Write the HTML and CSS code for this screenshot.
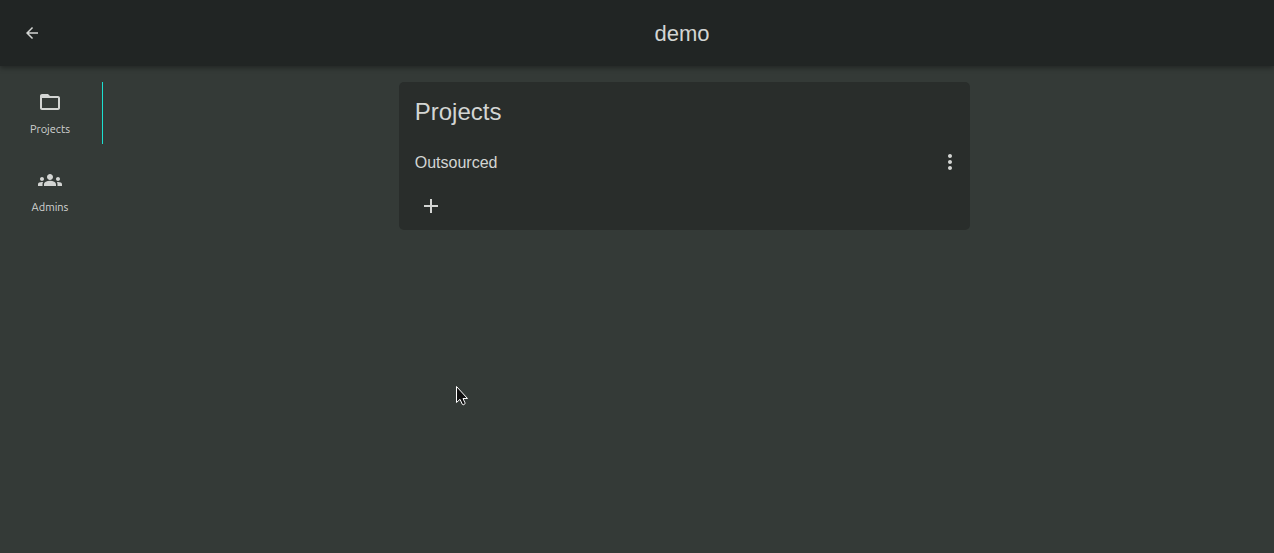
FILE: index.html
```html
<!DOCTYPE html>
<html lang="en">
<head>
<meta charset="utf-8">
<meta name="viewport" content="width=device-width, initial-scale=1">
<title>demo</title>
<link rel="stylesheet" href="styles.css">
</head>
<body>
<header class="topbar">
  <button class="icon-button back" type="button" aria-label="Back">
    <svg class="icon-small" viewBox="0 0 24 24"><path d="M20 11H7.83l5.59-5.59L12 4l-8 8 8 8 1.41-1.41L7.83 13H20v-2z"/></svg>
  </button>
  <h1 class="title">demo</h1>
</header>
<div class="layout">
  <nav class="sidebar">
    <a class="nav-item active" href="#projects" aria-current="page">
      <svg class="icon" viewBox="0 0 24 24"><path d="M20 6h-8l-2-2H4c-1.100 0-1.990.9-1.990 2L2 18c0 1.100.9 2 2 2h16c1.100 0 2-.9 2-2V8c0-1.100-.9-2-2-2zm0 12H4V8h16v10z"/></svg>
      <span>Projects</span>
    </a>
    <a class="nav-item" href="#admins">
      <svg class="icon" viewBox="0 0 24 24"><path d="M12 12.75c1.63 0 3.07.39 4.24.9 1.08.48 1.76 1.56 1.76 2.73V18H6v-1.61c0-1.18.68-2.26 1.76-2.73 1.17-.52 2.61-.91 4.24-.91zM4 13c1.100 0 2-.9 2-2s-.9-2-2-2-2 .9-2 2 .9 2 2 2zm1.130 1.100C4.760 14.040 4.390 14 4 14c-.99 0-1.930.21-2.780.58C.48 14.900 0 15.620 0 16.430V18h4.500v-1.610c0-.83.23-1.610.63-2.290zM20 13c1.100 0 2-.9 2-2s-.9-2-2-2-2 .9-2 2 .9 2 2 2zm4 3.430c0-.81-.48-1.530-1.220-1.850C21.930 14.210 20.990 14 20 14c-.39 0-.76.04-1.130.1.4.68.63 1.460.63 2.290V18H24v-1.570zM12 6c1.660 0 3 1.340 3 3s-1.340 3-3 3-3-1.340-3-3 1.340-3 3-3z"/></svg>
      <span>Admins</span>
    </a>
  </nav>
  <main class="content">
    <section class="card">
      <h2 class="card-title">Projects</h2>
      <ul class="list">
        <li class="row">
          <span class="row-name">Outsourced</span>
          <button class="icon-button" type="button" aria-label="Project options">
            <svg class="icon" viewBox="0 0 24 24"><path d="M12 8c1.100 0 2-.9 2-2s-.9-2-2-2-2 .9-2 2 .9 2 2 2zm0 2c-1.100 0-2 .9-2 2s.9 2 2 2 2-.9 2-2-.9-2-2-2zm0 6c-1.100 0-2 .9-2 2s.9 2 2 2 2-.9 2-2-.9-2-2-2z"/></svg>
          </button>
        </li>
      </ul>
      <button class="icon-button" type="button" aria-label="Add project">
        <svg class="icon" viewBox="0 0 24 24"><path d="M19 13h-6v6h-2v-6H5v-2h6V5h2v6h6v2z"/></svg>
      </button>
    </section>
  </main>
</div>
<svg class="pointer" viewBox="0 0 14 22"><path d="M1.500 1.500v16l3.500-3.200 2.300 5c1.200 1 3 .2 2.700-1.500L8 13.500h4.500z"/></svg>
</body>
</html>
```
FILE: styles.css
```css
* {
  box-sizing: border-box;
}

body {
  margin: 0;
  min-height: 100vh;
  background: #343a37;
  color: #d3d5d3;
  font: 16px/24px "Liberation Sans", Arial, sans-serif;
}

.topbar {
  display: flex;
  align-items: center;
  height: 66px;
  padding-left: 16px;
  background: #212524;
  box-shadow: 0 2px 5px rgba(0, 0, 0, 0.35);
}

.title {
  flex: 1;
  margin: 0;
  padding-top: 2px;
  font-size: 22px;
  font-weight: 400;
  text-align: center;
}

.icon-button {
  display: flex;
  align-items: center;
  justify-content: center;
  width: 32px;
  height: 32px;
  padding: 0;
  border: 0;
  background: none;
  color: inherit;
  cursor: pointer;
}

.back {
  margin-right: 42px;
}

.icon {
  width: 24px;
  height: 24px;
  fill: currentColor;
}

.icon-small {
  width: 18px;
  height: 18px;
  fill: currentColor;
}

.layout {
  display: flex;
  padding: 16px 8px 16px 0;
}

.sidebar {
  display: flex;
  flex-direction: column;
  gap: 16px;
  width: 103px;
}

.nav-item {
  display: flex;
  flex-direction: column;
  align-items: center;
  gap: 4px;
  height: 62px;
  padding: 8px 2px 0 0;
  border-right: 1px solid transparent;
  color: inherit;
  font: 11px/22px "Ubuntu", "Noto Sans", sans-serif;
  text-decoration: none;
}

.nav-item.active {
  border-color: #1ce0d0;
}

.content {
  flex: 1;
}

.card {
  width: calc(50% - 10px);
  margin: 0 auto;
  padding: 16px 16px 8px;
  border-radius: 5px;
  background: #292d2b;
}

.card-title {
  margin: 0;
  font-size: 24px;
  line-height: 28px;
  font-weight: 400;
}

.list {
  margin: 0;
  padding: 16px 0 8px;
  list-style: none;
}

.row {
  display: flex;
  align-items: center;
  justify-content: space-between;
  height: 40px;
}

.row-name {
  padding-top: 2px;
}

.row .icon-button {
  margin-right: -12px;
}

.pointer {
  position: absolute;
  left: 455px;
  top: 385px;
  width: 14px;
  height: 22px;
  fill: #111111;
  stroke: #ffffff;
  stroke-width: 1;
  pointer-events: none;
}
```
